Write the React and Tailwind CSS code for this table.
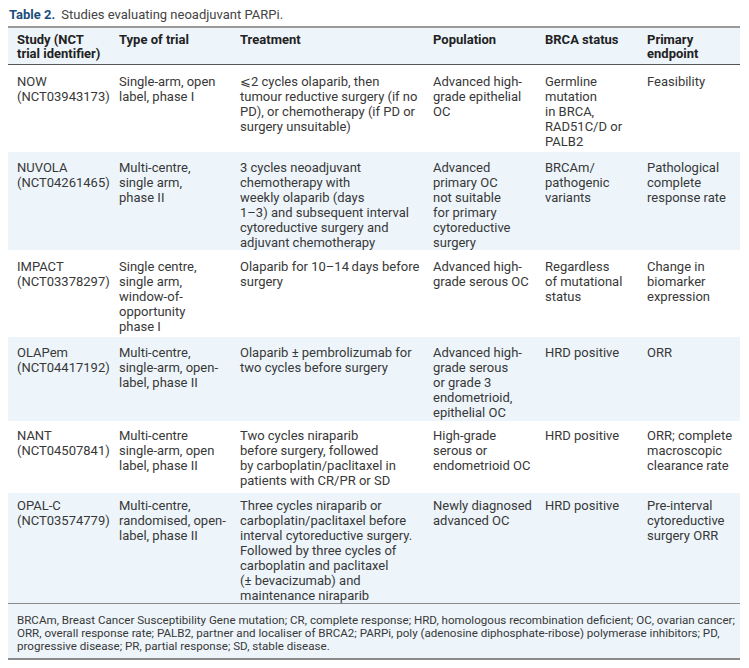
import React from "react";

const rows = [
  {
    h: "h-[87px]",
    bg: "bg-white",
    pt: "pt-[9px]",
    cells: [
      ["NOW", "(NCT03943173)"],
      ["Single-arm, open", "label, phase I"],
      ["⩽2 cycles olaparib, then", "tumour reductive surgery (if no", "PD), or chemotherapy (if PD or", "surgery unsuitable)"],
      ["Advanced high-", "grade epithelial", "OC"],
      ["Germline", "mutation", "in BRCA,", "RAD51C/D or", "PALB2"],
      ["Feasibility"],
    ],
  },
  {
    h: "h-[98px]",
    bg: "bg-[#edf5fb]",
    pt: "pt-[8px]",
    cells: [
      ["NUVOLA", "(NCT04261465)"],
      ["Multi-centre,", "single arm,", "phase II"],
      ["3 cycles neoadjuvant", "chemotherapy with", "weekly olaparib (days", "1–3) and subsequent interval", "cytoreductive surgery and", "adjuvant chemotherapy"],
      ["Advanced", "primary OC", "not suitable", "for primary", "cytoreductive", "surgery"],
      ["BRCAm/", "pathogenic", "variants"],
      ["Pathological", "complete", "response rate"],
    ],
  },
  {
    h: "h-[87px]",
    bg: "bg-white",
    pt: "pt-[9px]",
    cells: [
      ["IMPACT", "(NCT03378297)"],
      ["Single centre,", "single arm,", "window-of-", "opportunity", "phase I"],
      ["Olaparib for 10–14\u2009days before", "surgery"],
      ["Advanced high-", "grade serous OC"],
      ["Regardless", "of mutational", "status"],
      ["Change in", "biomarker", "expression"],
    ],
  },
  {
    h: "h-[84px]",
    bg: "bg-[#edf5fb]",
    pt: "pt-[8px]",
    cells: [
      ["OLAPem", "(NCT04417192)"],
      ["Multi-centre,", "single-arm, open-", "label, phase II"],
      ["Olaparib ± pembrolizumab for", "two cycles before surgery"],
      ["Advanced high-", "grade serous", "or grade 3", "endometrioid,", "epithelial OC"],
      ["HRD positive"],
      ["ORR"],
    ],
  },
  {
    h: "h-[72px]",
    bg: "bg-white",
    pt: "pt-[7px]",
    cells: [
      ["NANT", "(NCT04507841)"],
      ["Multi-centre", "single-arm, open", "label, phase II"],
      ["Two cycles niraparib", "before surgery, followed", "by carboplatin/paclitaxel in", "patients with CR/PR or SD"],
      ["High-grade", "serous or", "endometrioid OC"],
      ["HRD positive"],
      ["ORR; complete", "macroscopic", "clearance rate"],
    ],
  },
  {
    h: "h-[110px]",
    bg: "bg-[#edf5fb]",
    pt: "pt-[5px]",
    cells: [
      ["OPAL-C", "(NCT03574779)"],
      ["Multi-centre,", "randomised, open-", "label, phase II"],
      ["Three cycles niraparib or", "carboplatin/paclitaxel before", "interval cytoreductive surgery.", "Followed by three cycles of", "carboplatin and paclitaxel", "(± bevacizumab) and", "maintenance niraparib"],
      ["Newly diagnosed", "advanced OC"],
      ["HRD positive"],
      ["Pre-interval", "cytoreductive", "surgery ORR"],
    ],
  },
];

const headers = [
  ["Study (NCT", "trial identifier)"],
  ["Type of trial"],
  ["Treatment"],
  ["Population"],
  ["BRCA status"],
  ["Primary", "endpoint"],
];

const cols = "grid grid-cols-[102px_121px_193px_112px_102px_102px]";

export default function App() {
  return (
    <div className="w-[749px] h-[668px] bg-white [font-family:Roboto,'Liberation_Sans',sans-serif] text-[#383838]">
      <div className="px-[8px] pt-[6px]">
        <div className="h-[20px] pl-[1px] text-[13px] leading-[17px] whitespace-nowrap">
          <span className="font-bold text-[#1d4d7c]">Table 2.</span>
          <span className="ml-[6px] text-[#444]">Studies evaluating neoadjuvant PARPi.</span>
        </div>
        <div className="w-[732px] border-t-2 border-[#9a9a9a]">
          <div className={`${cols} h-[37px] bg-[#edf5fb] border-b border-[#555]`}>
            {headers.map((lines, i) => (
              <div key={i} className="pl-[9px] pt-[5px] text-[13px] leading-[14px] font-bold text-[#222] whitespace-nowrap">
                {lines.map((l, j) => (
                  <div key={j}>{l}</div>
                ))}
              </div>
            ))}
          </div>
          {rows.map((r, i) => (
            <div key={i} className={`${cols} ${r.h} ${r.bg}`}>
              {r.cells.map((lines, j) => (
                <div key={j} className={`pl-[9px] ${r.pt} text-[13px] leading-[15px] whitespace-nowrap`}>
                  {lines.map((l, k) => (
                    <div key={k}>{l}</div>
                  ))}
                </div>
              ))}
            </div>
          ))}
          <div className="h-[57px] bg-[#edf5fb] border-t border-b-2 border-[#8a8a8a] pl-[9px] pt-[10px] text-[11.6px] leading-[13px] whitespace-nowrap">
            <div>BRCAm, Breast Cancer Susceptibility Gene mutation; CR, complete response; HRD, homologous recombination deficient; OC, ovarian cancer;</div>
            <div>ORR, overall response rate; PALB2, partner and localiser of BRCA2; PARPi, poly (adenosine diphosphate-ribose) polymerase inhibitors; PD,</div>
            <div>progressive disease; PR, partial response; SD, stable disease.</div>
          </div>
        </div>
      </div>
    </div>
  );
}
